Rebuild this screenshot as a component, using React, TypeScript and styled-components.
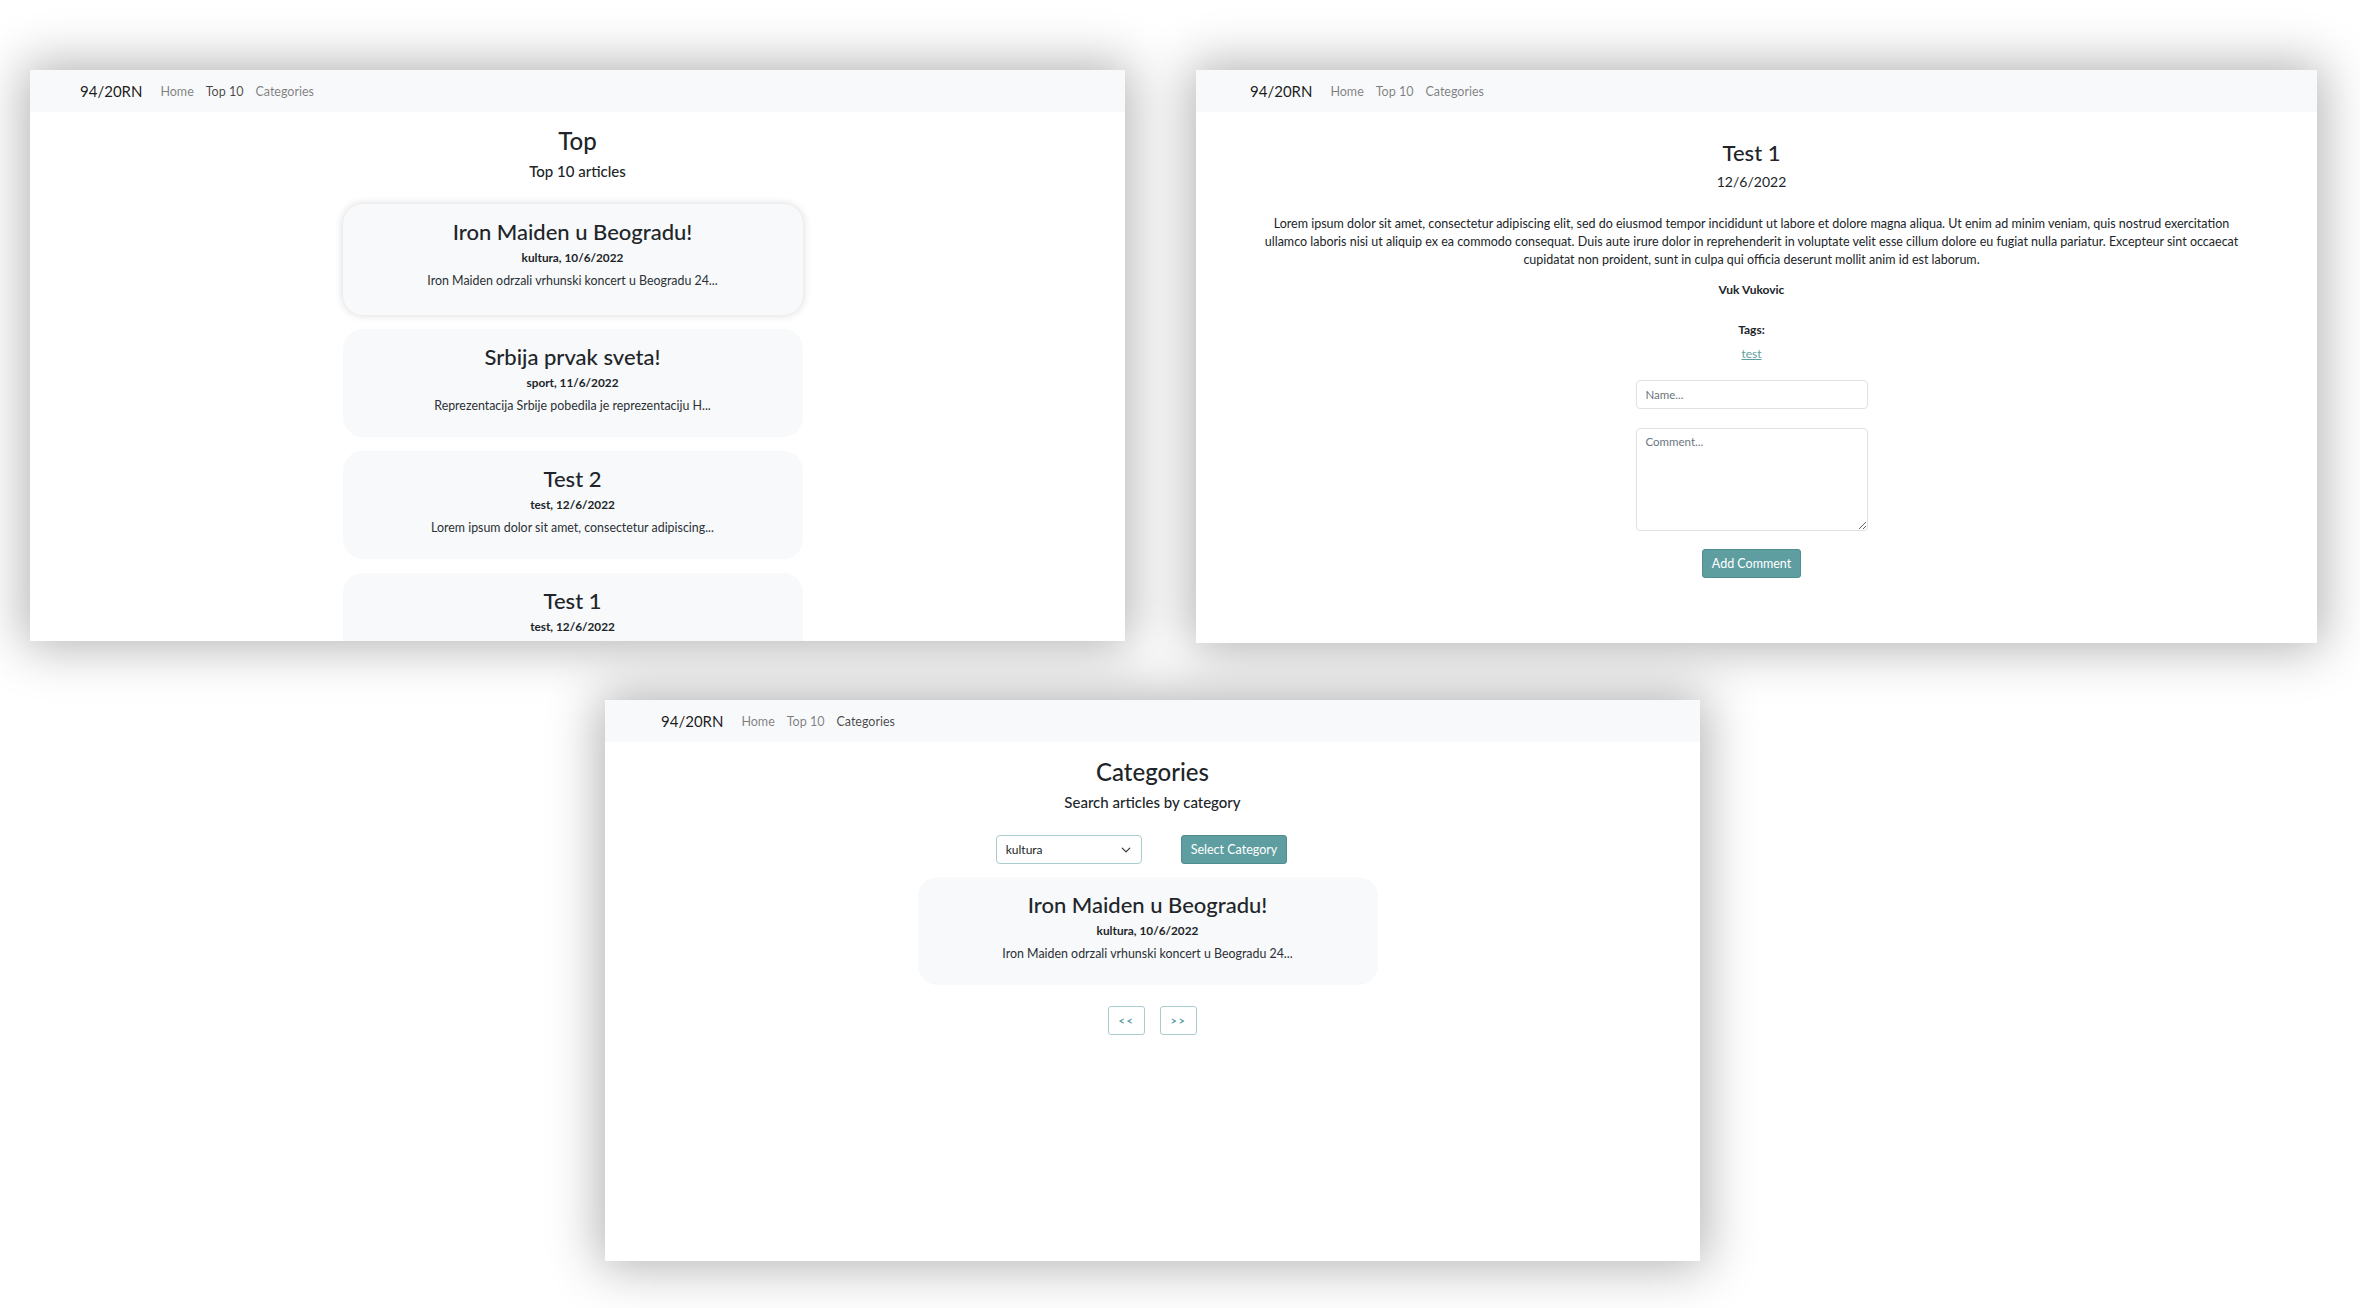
import React from "react";
import styled, { createGlobalStyle } from "styled-components";

const teal = "#5f9ea0";

interface IArticle {
  title: string;
  category: string;
  date: string;
  excerpt: string;
}

const articles: IArticle[] = [
  {
    title: "Iron Maiden u Beogradu!",
    category: "kultura",
    date: "10/6/2022",
    excerpt: "Iron Maiden odrzali vrhunski koncert u Beogradu 24...",
  },
  {
    title: "Srbija prvak sveta!",
    category: "sport",
    date: "11/6/2022",
    excerpt: "Reprezentacija Srbije pobedila je reprezentaciju H...",
  },
  {
    title: "Test 2",
    category: "test",
    date: "12/6/2022",
    excerpt: "Lorem ipsum dolor sit amet, consectetur adipiscing...",
  },
  {
    title: "Test 1",
    category: "test",
    date: "12/6/2022",
    excerpt: "Lorem ipsum dolor sit amet, consectetur adipiscing...",
  },
];

const lorem =
  "Lorem ipsum dolor sit amet, consectetur adipiscing elit, sed do eiusmod tempor incididunt ut labore et dolore magna aliqua. Ut enim ad minim veniam, quis nostrud exercitation ullamco laboris nisi ut aliquip ex ea commodo consequat. Duis aute irure dolor in reprehenderit in voluptate velit esse cillum dolore eu fugiat nulla pariatur. Excepteur sint occaecat cupidatat non proident, sunt in culpa qui officia deserunt mollit anim id est laborum.";

const Nav = ({ active, inset = 50 }: { active?: string; inset?: number }) => (
  <NavBar inset={inset}>
    <Brand>94/20RN</Brand>
    {["Home", "Top 10", "Categories"].map(link => (
      <NavLink key={link} active={link === active}>
        {link}
      </NavLink>
    ))}
  </NavBar>
);

const ArticleCard = ({ article, raised }: { article: IArticle; raised?: boolean }) => (
  <Card raised={raised}>
    <CardTitle>{article.title}</CardTitle>
    <CardMeta>
      {article.category}, {article.date}
    </CardMeta>
    <CardExcerpt>{article.excerpt}</CardExcerpt>
  </Card>
);

const Chevron = () => (
  <svg width="10" height="10" viewBox="0 0 16 16" fill="none">
    <path d="M2 5l6 6 6-6" stroke="#343a40" strokeWidth="2" strokeLinecap="round" strokeLinejoin="round" />
  </svg>
);

const App = () => {
  return (
    <>
      <GlobalStyle />
      <Page>
        <Row>
          <Window width={1095} height={571}>
            <Nav active="Top 10" />
            <Content>
              <PageTitle top={15} size={24}>Top</PageTitle>
              <Subtitle>Top 10 articles</Subtitle>
              <CardList>
                {articles.map((a, i) => (
                  <ArticleCard key={a.title} article={a} raised={i === 0} />
                ))}
              </CardList>
            </Content>
          </Window>

          <Window width={1121} height={573}>
            <Nav inset={54} />
            <Content shift={10}>
              <PageTitle top={27} size={22}>Test 1</PageTitle>
              <DateLine>12/6/2022</DateLine>
              <ArticleText>{lorem}</ArticleText>
              <Author>Vuk Vukovic</Author>
              <TagsLabel>Tags:</TagsLabel>
              <TagLink href="#">test</TagLink>
              <Input placeholder="Name..." />
              <TextArea placeholder="Comment..." />
              <PrimaryButton top={18}>Add Comment</PrimaryButton>
            </Content>
          </Window>
        </Row>

        <BottomRow>
          <Window width={1095} height={561}>
            <Nav active="Categories" inset={56} />
            <Content>
              <PageTitle top={16} size={24}>Categories</PageTitle>
              <Subtitle>Search articles by category</Subtitle>
              <FilterRow>
                <SelectBox>
                  <span>kultura</span>
                  <Chevron />
                </SelectBox>
                <PrimaryButton>Select Category</PrimaryButton>
              </FilterRow>
              <CardList top={13}>
                <ArticleCard article={articles[0]} />
              </CardList>
              <Pager>
                <PageButton>&lt;&lt;</PageButton>
                <PageButton>&gt;&gt;</PageButton>
              </Pager>
            </Content>
          </Window>
        </BottomRow>
      </Page>
    </>
  );
};

export default App;

const GlobalStyle = createGlobalStyle`
  * {
    box-sizing: border-box;
  }
  body {
    margin: 0;
    background: #fff;
    font-family: Lato, "Open Sans", sans-serif;
    color: #212529;
  }
`;

const Page = styled.div`
  width: 2360px;
  height: 1308px;
  padding: 70px 0 0 30px;
  overflow: hidden;
`;

const Row = styled.div`
  display: flex;
  align-items: flex-start;
  gap: 71px;
`;

const BottomRow = styled.div`
  display: flex;
  margin-top: 57px;
  padding-left: 575px;
`;

const Window = styled.div<{ width: number; height: number }>`
  width: ${({ width }) => width}px;
  height: ${({ height }) => height}px;
  flex: none;
  overflow: hidden;
  background: #fff;
  box-shadow: 0 0 48px 6px rgba(0, 0, 0, 0.3);
`;

const NavBar = styled.div<{ inset: number }>`
  display: flex;
  align-items: center;
  height: 42px;
  padding-left: ${({ inset }) => inset}px;
  background: #f8f9fa;
`;

const Brand = styled.span`
  font-size: 15px;
  color: rgba(0, 0, 0, 0.9);
  margin-right: 12px;
`;

const NavLink = styled.span<{ active?: boolean }>`
  font-size: 12.5px;
  padding: 0 6px;
  color: ${({ active }) => (active ? "rgba(0, 0, 0, 0.72)" : "rgba(0, 0, 0, 0.5)")};
`;

const Content = styled.div<{ shift?: number }>`
  display: flex;
  flex-direction: column;
  align-items: center;
  text-align: center;
  padding-right: ${({ shift }) => shift ?? 0}px;
`;

const PageTitle = styled.h2<{ top: number; size: number }>`
  margin: ${({ top }) => top}px 0 0;
  font-size: ${({ size }) => size}px;
  line-height: 28px;
  font-weight: 500;
`;

const Subtitle = styled.div`
  margin-top: 6px;
  font-size: 15px;
  line-height: 20px;
  font-weight: 500;
`;

const CardList = styled.div<{ top?: number }>`
  display: flex;
  flex-direction: column;
  gap: 14px;
  width: 460px;
  margin-top: ${({ top }) => top ?? 23}px;
  margin-right: 10px;
`;

const Card = styled.div<{ raised?: boolean }>`
  height: ${({ raised }) => (raised ? 111 : 108)}px;
  flex: none;
  padding: 15px 20px 0;
  border-radius: 20px;
  background: #f7f9fa;
  box-shadow: ${({ raised }) => (raised ? "0 0 8px rgba(0, 0, 0, 0.16)" : "none")};
`;

const CardTitle = styled.div`
  font-size: 22px;
  line-height: 26px;
  font-weight: 500;
`;

const CardMeta = styled.div`
  margin-top: 4px;
  font-size: 11.8px;
  line-height: 18px;
  font-weight: 700;
`;

const CardExcerpt = styled.div`
  margin-top: 5px;
  font-size: 12.4px;
  line-height: 18px;
  color: #2b3035;
`;

const DateLine = styled.div`
  margin-top: 5px;
  font-size: 14px;
  line-height: 20px;
`;

const ArticleText = styled.p`
  margin: 23px 0 0;
  padding: 0 62px;
  font-size: 12.5px;
  line-height: 18px;
`;

const Author = styled.div`
  margin-top: 12px;
  font-size: 12px;
  line-height: 18px;
  font-weight: 700;
`;

const TagsLabel = styled(Author)`
  margin-top: 22px;
`;

const TagLink = styled.a`
  margin-top: 6px;
  font-size: 12px;
  line-height: 18px;
  color: ${teal};
`;

const Input = styled.input`
  width: 232px;
  height: 29px;
  margin-top: 17px;
  padding: 0 9px;
  border: 1px solid #dee2e6;
  border-radius: 4px;
  font-family: inherit;
  font-size: 11.5px;
  &::placeholder {
    color: #6c757d;
  }
`;

const TextArea = styled.textarea`
  width: 232px;
  height: 103px;
  margin-top: 19px;
  padding: 6px 9px;
  border: 1px solid #dee2e6;
  border-radius: 4px;
  font-family: inherit;
  font-size: 11.5px;
  &::placeholder {
    color: #6c757d;
  }
`;

const PrimaryButton = styled.button<{ top?: number }>`
  height: 29px;
  margin-top: ${({ top }) => top ?? 0}px;
  padding: 0 9px;
  border: 1px solid #4f8d8f;
  border-radius: 3px;
  background: ${teal};
  color: #fff;
  font-family: inherit;
  font-size: 12.5px;
`;

const FilterRow = styled.div`
  display: flex;
  align-items: center;
  gap: 39px;
  margin-top: 23px;
  margin-right: 22px;
`;

const SelectBox = styled.div`
  display: flex;
  align-items: center;
  justify-content: space-between;
  width: 146px;
  height: 29px;
  padding: 0 10px 0 9px;
  border: 1px solid #a9cdce;
  border-radius: 4px;
  font-size: 12px;
`;

const Pager = styled.div`
  display: flex;
  gap: 15px;
  margin-top: 21px;
`;

const PageButton = styled.button`
  width: 37px;
  height: 29px;
  padding: 0;
  border: 1px solid #a9cdce;
  border-radius: 3px;
  background: #fff;
  color: ${teal};
  font-family: inherit;
  font-size: 11px;
  font-weight: 700;
  letter-spacing: 1.5px;
`;
